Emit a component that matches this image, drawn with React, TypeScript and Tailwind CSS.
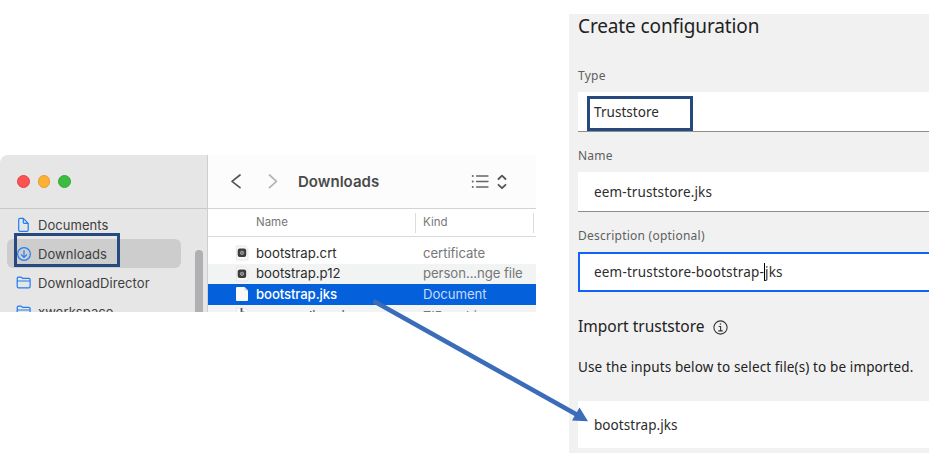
import React from "react";

const FolderIcon = () => (
  <svg width="16" height="14" viewBox="0 0 16 14" fill="none" stroke="#1f7cf5" strokeWidth="1.2" strokeLinejoin="round">
    <path d="M1.2 10.6V2.4c0-.8.5-1.2 1.2-1.2h2.4c.6 0 .9.2 1.3.6l.5.5h6.1c.9 0 1.4.5 1.4 1.3v7c0 .9-.5 1.3-1.3 1.3H2.5c-.8 0-1.3-.5-1.3-1.3ZM1.2 5h12.9" />
  </svg>
);

const DocIcon = () => (
  <svg width="16" height="16" viewBox="0 0 16 16" fill="none" stroke="#1f7cf5" strokeWidth="1.2" strokeLinejoin="round">
    <path d="M2.7 12.9V2.8c0-.9.5-1.4 1.3-1.4h3.3l4.9 5v6.5c0 .9-.5 1.4-1.3 1.4H4c-.8 0-1.3-.5-1.3-1.4ZM7.3 1.4v3.8c0 .8.4 1.2 1.2 1.2h3.7" />
  </svg>
);

const DownloadIcon = () => (
  <svg width="16" height="16" viewBox="0 0 16 16" fill="none" stroke="#1f7cf5" strokeWidth="1.2" strokeLinecap="round" strokeLinejoin="round">
    <circle cx="8" cy="8" r="6.4" />
    <path d="M8 4.5v6.7M5.4 8.8 8 11.4l2.6-2.6" />
  </svg>
);

const CertIcon = () => (
  <svg width="14" height="16" viewBox="0 0 14 16">
    <path d="M1.5 1h8.6L13 4v11H1.500Z" fill="#f8f8f8" stroke="#dedede" strokeWidth=".7" />
    <rect x="2.700" y="3.500" width="8.500" height="8.500" rx="2" fill="#3c3c3c" />
    <circle cx="7" cy="7.800" r="1.700" fill="#777" stroke="#aaa" strokeWidth=".8" />
  </svg>
);

const PageIcon = () => (
  <svg width="14" height="16" viewBox="0 0 14 16">
    <path d="M2 1h7.500L13 4.500V14q0 1-1 1H2q-1 0-1-1V2q0-1 1-1Z" fill="#f8f8f8" />
    <path d="M9.500 1 13 4.500H9.500Z" fill="#d5d9df" />
  </svg>
);

const ArchiveIcon = () => (
  <svg width="14" height="16" viewBox="0 0 14 16">
    <path d="M1.500 1H10l3 3v11H1.500Z" fill="#fafafa" stroke="#ddd" strokeWidth=".6" />
    <path d="M6.500 1v6" stroke="#555" strokeWidth="1.800" />
    <path d="M6.500 4.500h3v5h-3Z" fill="#777" />
  </svg>
);

const places = [
  { label: "Documents", icon: <DocIcon /> },
  { label: "Downloads", icon: <DownloadIcon />, active: true },
  { label: "DownloadDirector", icon: <FolderIcon /> },
  { label: "xworkspace", icon: <FolderIcon /> },
];

const files = [
  { name: "bootstrap.crt", kind: "certificate", icon: <CertIcon />, row: "bg-white", text: "pt-px text-[#2b2b2b]", kindText: "pt-px text-[#777]" },
  { name: "bootstrap.p12", kind: "person...nge file", icon: <CertIcon />, row: "bg-[#f2f4f4]", text: "text-[#2b2b2b]", kindText: "text-[#777]" },
  { name: "bootstrap.jks", kind: "Document", icon: <PageIcon />, row: "bg-[#0560dc]", text: "pt-px text-white font-medium tracking-[-0.12px]", kindText: "pt-px text-[#c6dbfa]" },
  { name: "eem-audios.zip", kind: "ZIP archive", icon: <ArchiveIcon />, row: "bg-[#f2f4f4]", text: "pt-[4px] text-[#2b2b2b]", kindText: "pt-[4px] text-[#777]" },
];

function Finder() {
  return (
    <section className="flex h-[157px] w-[536px] overflow-hidden bg-white font-['Inter',sans-serif]">
      <aside className="flex w-[208px] shrink-0 flex-col rounded-tl-[8px] border-r border-[#cfcfcf] bg-[#e6e6e6]">
        <div className="flex h-[54px] shrink-0 items-center gap-[8px] border-b border-[#c8c8c8] pl-[17px]">
          <span className="size-[12.500px] rounded-full border border-[#e04440] bg-[#fc5450]" />
          <span className="size-[12.500px] rounded-full border border-[#dfa02f] bg-[#fdb035]" />
          <span className="size-[12.500px] rounded-full border border-[#35a638] bg-[#3dbc42]" />
        </div>
        <div className="flex min-h-0 flex-1 overflow-hidden">
          <nav className="ml-[7px] mt-[1px] w-[174px]">
            {places.map((p) => (
              <div key={p.label} className={`flex h-[29px] items-center gap-[6px] rounded-[6px] pl-[9px] ${p.active ? "bg-[#cdcdcd]" : ""}`}>
                <span className="flex w-4 justify-center">{p.icon}</span>
                <span className="pt-[2px] text-[13px] tracking-[0.06px] text-[#404040]">{p.label}</span>
              </div>
            ))}
          </nav>
          <div className="ml-[14px] mt-[41px] h-[100px] w-[8px] rounded-full bg-[#b0b0b2]" />
        </div>
      </aside>
      <div className="flex min-w-0 flex-1 flex-col">
        <header className="flex h-[54px] shrink-0 items-center border-b border-[#d3d3d3] bg-[#fcfcfc] pl-[22px] text-[#555]">
          <svg width="48" height="18" viewBox="0 0 48 18" fill="none" strokeWidth="1.700" strokeLinecap="round" strokeLinejoin="round">
            <path d="M10 2 2 8.300 10 14.600" stroke="#555" />
            <path d="m39.500 2 7 6.300-7 6.300" stroke="#b4b4b4" />
          </svg>
          <h2 className="ml-[20px] w-[173px] pt-px text-[15px] font-semibold tracking-[0.030px] text-[#4a4a4a]">Downloads</h2>
          <svg width="36" height="18" viewBox="0 0 36 18" fill="none" stroke="#666" strokeWidth="1.300" strokeLinecap="round" strokeLinejoin="round">
            <path d="M5.500 3h11.500M5.500 8.500h11.500M5.500 14h11.500" />
            <path d="M1.700 3h.1M1.700 8.500h.1M1.700 14h.1" strokeWidth="1.900" />
            <path d="M27.500 6 31 2.600 34.500 6M27.500 11.800 31 15.200l3.500-3.400" stroke="#555" strokeWidth="1.800" />
          </svg>
        </header>
        <div className="flex h-[28px] shrink-0 items-center border-b border-[#d9d9d9] text-[11.500px] text-[#777]">
          <span className="w-[207px] pl-[48px] pt-px">Name</span>
          <span className="flex h-[20px] w-[119px] items-center border-x border-[#dcdcdc] pl-[7px] pt-px">Kind</span>
        </div>
        <div className="pt-[6px]">
          {files.map((f) => (
            <div key={f.name} className={`flex h-[20.500px] items-center text-[13.200px] ${f.row}`}>
              <span className="ml-[27px] w-[21px]">{f.icon}</span>
              <span className={`w-[167px] ${f.text}`}>{f.name}</span>
              <span className={`tracking-[-0.08px] ${f.kindText}`}>{f.kind}</span>
            </div>
          ))}
        </div>
      </div>
    </section>
  );
}

const label = "flex h-[16px] items-center text-[12px] tracking-[0.240px] text-[#606060]";
const field = "flex h-[40px] items-center border-b border-[#8d8d8d] bg-white pl-[16px] text-[13.500px] tracking-[0.14px] text-[#2c2c2c]";

function Configuration() {
  return (
    <section className="flex h-[439px] w-[360px] flex-col bg-[#f1f1f1] pl-[9px] font-['Noto_Sans',sans-serif] text-[#222]">
      <h1 className="h-[25px] text-[19px] leading-[24px] tracking-[-0.12px]">Create configuration</h1>
      <div className={`${label} mt-[29px]`}>Type</div>
      <div className={`${field} mt-[8px]`}>
        <span className="pt-px tracking-[0.05px]">Truststore</span>
      </div>
      <div className={`${label} mt-[16px]`}>Name</div>
      <div className={`${field} mt-[8px]`}>
        <span className="pt-px">eem-truststore.jks</span>
      </div>
      <div className={`${label} mt-[16px]`}>Description (optional)</div>
      <div className="mt-[8px] flex h-[40px] items-center border-y-2 border-l-2 border-[#1062fe] bg-white pl-[14px] text-[13.500px] tracking-[0.18px] text-[#2c2c2c]">
        <span className="pt-px">eem-truststore-bootstrap-</span>
        <span className="h-[18px] w-px bg-black" />
        <span className="pt-px">jks</span>
      </div>
      <div className="mt-[23px] flex h-[24px] items-center gap-[8px]">
        <h2 className="w-[127px] whitespace-nowrap text-[15.500px]">Import truststore</h2>
        <svg width="15" height="15" viewBox="0 0 15 15" fill="none" stroke="#333">
          <circle cx="7.500" cy="7.500" r="6.600" strokeWidth="1.100" />
          <path d="M5.700 6.500h1.900v4.200M5.300 10.900h4.500" strokeWidth="1.100" />
          <circle cx="7.400" cy="4" r=".8" fill="#333" stroke="none" />
        </svg>
      </div>
      <p className="mt-[18px] h-[20px] whitespace-nowrap text-[13.500px] leading-[20px] tracking-[0.12px]">Use the inputs below to select file(s) to be imported.</p>
      <div className="mt-[24px] flex h-[47px] items-center bg-white pl-[16px] text-[13.500px] tracking-[0.05px] text-[#2c2c2c]">
        <span className="pt-px">bootstrap.jks</span>
      </div>
    </section>
  );
}

export default function App() {
  return (
    <main className="relative flex h-[457px] w-[947px] overflow-hidden bg-white">
      <div className="w-[569px] shrink-0 pt-[155px]">
        <Finder />
      </div>
      <div className="pt-[14px]">
        <Configuration />
      </div>
      <div className="absolute left-[14px] top-[233px] h-[34px] w-[106px] border-[3px] border-[#264a80]" />
      <div className="absolute left-[587px] top-[96px] h-[35px] w-[106px] border-[3px] border-[#264a80]" />
      <svg className="absolute left-[365px] top-[290px]" width="230" height="140" viewBox="365 290 230 140">
        <path d="M373.500 301 577 414.800" stroke="#3b6cb9" strokeWidth="4.600" />
        <path d="M579.500 407.500 588 421.200 572 420.500Z" fill="#3b6cb9" />
      </svg>
    </main>
  );
}
